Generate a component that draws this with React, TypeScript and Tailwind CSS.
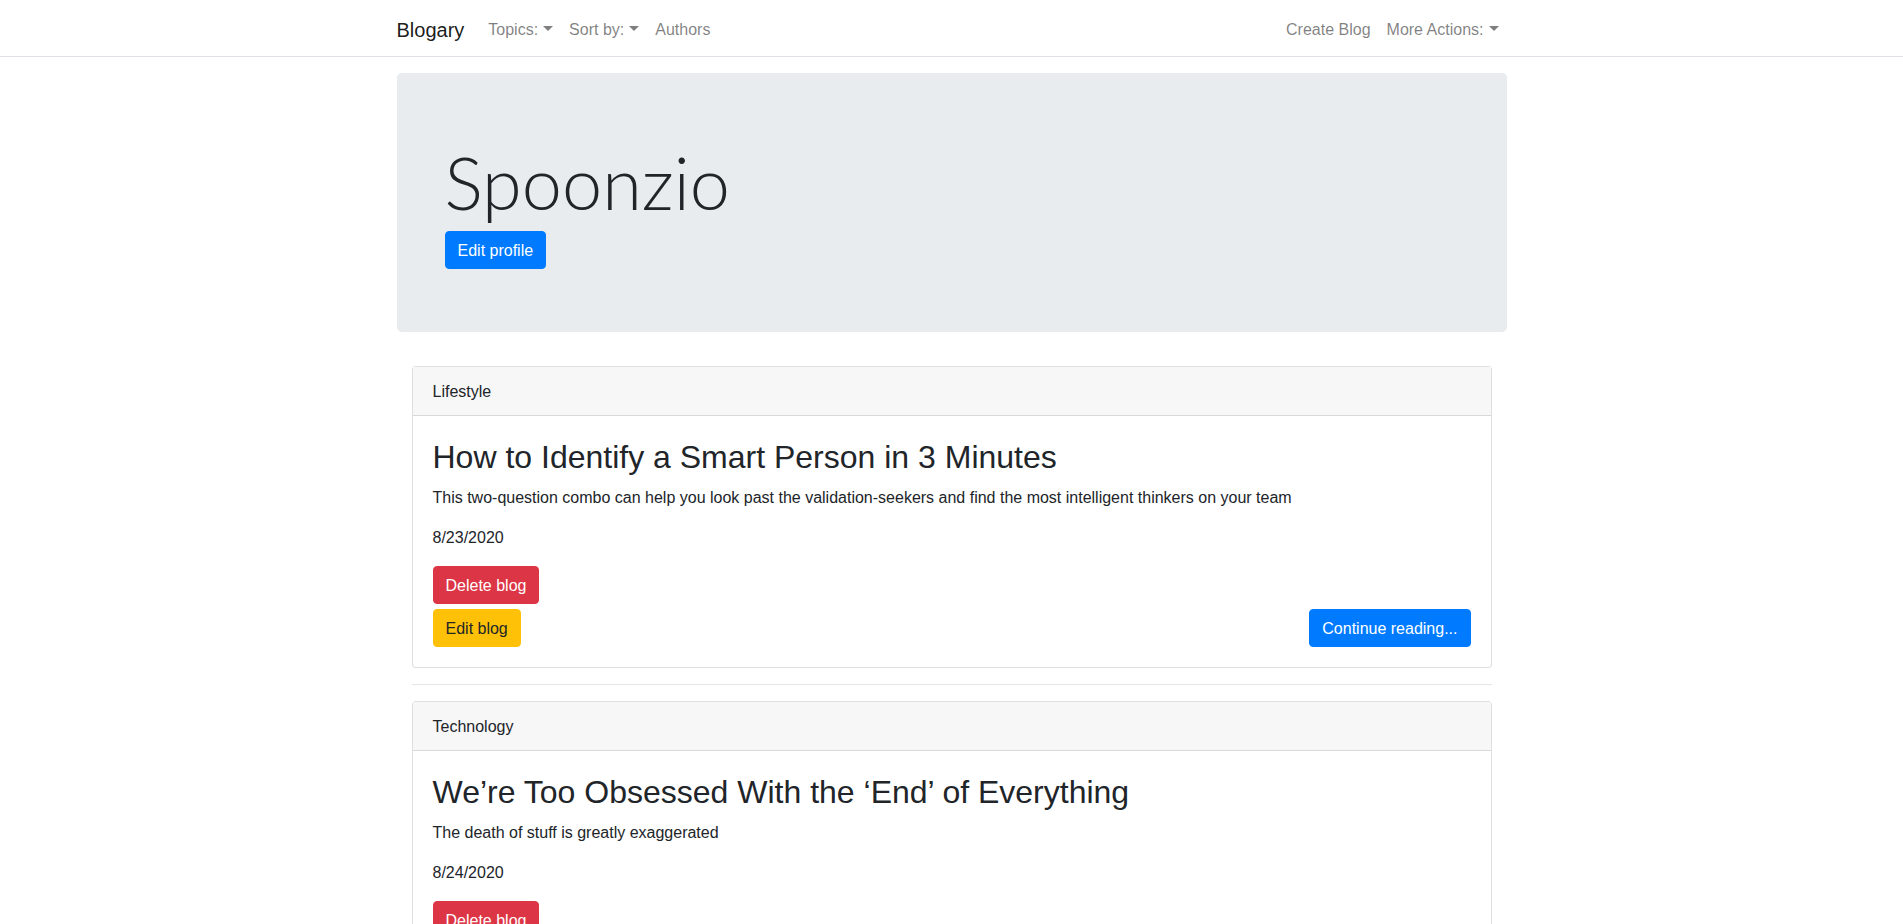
import React from "react";

const BLOGS = [
  {
    topic: "Lifestyle",
    title: "How to Identify a Smart Person in 3 Minutes",
    summary:
      "This two-question combo can help you look past the validation-seekers and find the most intelligent thinkers on your team",
    date: "8/23/2020",
  },
  {
    topic: "Technology",
    title: "We\u2019re Too Obsessed With the \u2018End\u2019 of Everything",
    summary: "The death of stuff is greatly exaggerated",
    date: "8/24/2020",
  },
];

function Caret() {
  return (
    <span className="ml-[5px] inline-block align-[4px] border-x-[5px] border-t-[5px] border-x-transparent border-t-current" />
  );
}

function Navbar() {
  return (
    <nav className="border-b border-[#dee2e6] bg-white">
      <div className="mx-auto flex h-[56px] w-[1110px] items-center pt-[4px]">
        <a className="mr-4 py-[5px] text-[20px] leading-[30px] text-black/90">Blogary</a>
        <ul className="flex items-center">
          <li className="px-2 py-2 leading-6 text-black/50">
            Topics:
            <Caret />
          </li>
          <li className="px-2 py-2 leading-6 text-black/50">
            Sort by:
            <Caret />
          </li>
          <li className="px-2 py-2 leading-6 text-black/50">Authors</li>
        </ul>
        <ul className="ml-auto flex items-center">
          <li className="px-2 py-2 leading-6 text-black/50">Create Blog</li>
          <li className="px-2 py-2 leading-6 text-black/50">
            More Actions:
            <Caret />
          </li>
        </ul>
      </div>
    </nav>
  );
}

function BlogCard({ blog }: { blog: (typeof BLOGS)[number] }) {
  return (
    <div className="rounded-[4px] border border-black/[0.125] bg-white">
      <div className="border-b border-black/[0.125] bg-[#f7f7f7] px-5 pb-[11px] pt-[13px] leading-6">{blog.topic}</div>
      <div className="px-5 pb-5 pt-[22px]">
        <h2 className="mb-[10px] text-[32px] font-normal leading-[38px]">{blog.title}</h2>
        <p className="mb-4 leading-6">{blog.summary}</p>
        <p className="mb-4 leading-6">{blog.date}</p>
        <div className="flex items-end justify-between">
          <div className="flex flex-col items-start gap-[5px]">
            <button className="rounded-[4px] border border-[#dc3545] bg-[#dc3545] px-3 pb-[5px] pt-[7px] leading-6 text-white">
              Delete blog
            </button>
            <button className="rounded-[4px] border border-[#ffc107] bg-[#ffc107] px-3 pb-[5px] pt-[7px] leading-6 text-[#212529]">
              Edit blog
            </button>
          </div>
          <button className="rounded-[4px] border border-[#007bff] bg-[#007bff] px-3 pb-[5px] pt-[7px] leading-6 text-white">
            Continue reading...
          </button>
        </div>
      </div>
    </div>
  );
}

export default function App() {
  return (
    <div className="min-h-screen bg-white font-['Liberation_Sans',Arial,sans-serif] text-base text-[#212529]">
      <Navbar />
      <main className="mx-auto w-[1110px] pb-10">
        <section className="mt-4 rounded-[4.8px] bg-[#e9ecef] px-12 pb-[63px] pt-[66px]">
          <h1 className="mb-[6px] font-['Lato',sans-serif] text-[72px] font-light leading-[86px]">Spoonzio</h1>
          <button className="rounded-[4px] border border-[#007bff] bg-[#007bff] px-3 pb-[5px] pt-[7px] leading-6 text-white">
            Edit profile
          </button>
        </section>
        <div className="mt-[34px] px-[15px]">
          {BLOGS.map((blog, i) => (
            <div key={blog.title}>
              {i > 0 && <hr className="my-4 border-t border-black/10" />}
              <BlogCard blog={blog} />
            </div>
          ))}
        </div>
      </main>
    </div>
  );
}
